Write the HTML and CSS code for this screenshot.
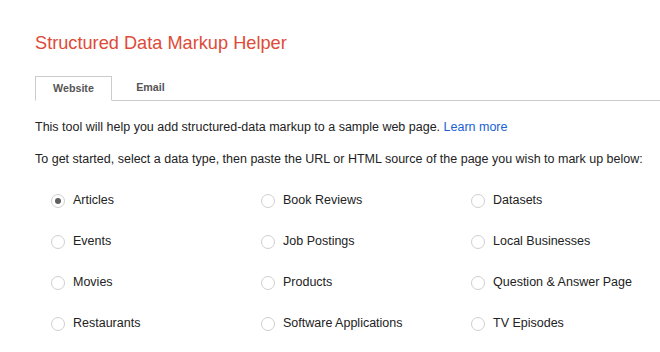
FILE: index.html
```html
<!DOCTYPE html>
<html lang="en">
<head>
    <meta charset="UTF-8">
    <meta name="viewport" content="width=device-width, initial-scale=1.0">
    <title>Structured Data Markup Helper</title>
    <link rel="stylesheet" href="styles.css">
</head>
<body>
    <div class="page">
        <h1 class="title">Structured Data Markup Helper</h1>

        <div class="tabs">
            <div class="tab active">Website</div>
            <div class="tab">Email</div>
        </div>

        <p class="intro">This tool will help you add structured-data markup to a sample web page. <a href="#">Learn more</a></p>
        <p class="intro">To get started, select a data type, then paste the URL or HTML source of the page you wish to mark up below:</p>

        <div class="types">
            <label class="type"><input type="radio" name="type" checked> Articles</label>
            <label class="type"><input type="radio" name="type"> Book Reviews</label>
            <label class="type"><input type="radio" name="type"> Datasets</label>
            <label class="type"><input type="radio" name="type"> Events</label>
            <label class="type"><input type="radio" name="type"> Job Postings</label>
            <label class="type"><input type="radio" name="type"> Local Businesses</label>
            <label class="type"><input type="radio" name="type"> Movies</label>
            <label class="type"><input type="radio" name="type"> Products</label>
            <label class="type"><input type="radio" name="type"> Question &amp; Answer Page</label>
            <label class="type"><input type="radio" name="type"> Restaurants</label>
            <label class="type"><input type="radio" name="type"> Software Applications</label>
            <label class="type"><input type="radio" name="type"> TV Episodes</label>
        </div>
    </div>
</body>
</html>
```

FILE: styles.css
```css
* {
    margin: 0;
    padding: 0;
    box-sizing: border-box;
    font-family: 'Liberation Sans', Arial, sans-serif;
}
body {
    color: #222;
    background: #fff;
}
.page {
    padding: 31px 0 0 35px;
}
.title {
    font-size: 18.2px;
    font-weight: normal;
    color: #dd4b39;
    line-height: 24px;
}
.tabs {
    display: flex;
    margin-top: 21px;
    border-bottom: 1px solid #ccc;
    height: 25px;
}
.tab {
    width: 77px;
    height: 25px;
    font-size: 10.7px;
    font-weight: bold;
    color: #555;
    text-align: center;
    line-height: 23px;
}
.tab.active {
    border: 1px solid #ccc;
    border-bottom: 1px solid #fff;
    background: #fff;
}
.intro {
    font-size: 12.5px;
    line-height: 16px;
    margin-top: 18px;
}
.intro + .intro {
    margin-top: 16px;
}
.intro a {
    color: #1a5fd6;
    text-decoration: none;
}
.types {
    display: grid;
    grid-template-columns: repeat(3, 210px);
    grid-auto-rows: 41px;
    padding: 25px 0 0 16px;
}
.type {
    display: flex;
    align-items: flex-start;
    font-size: 12.5px;
    line-height: 16px;
    gap: 8px;
}
.type input {
    appearance: none;
    width: 14px;
    height: 14px;
    margin-top: 2px;
    border: 1px solid #cfcfcf;
    border-radius: 50%;
    background: #fff;
    position: relative;
}
.type input:checked::after {
    content: '';
    position: absolute;
    left: 3px;
    top: 3px;
    width: 6px;
    height: 6px;
    border-radius: 50%;
    background: #5f5f5f;
}
```
